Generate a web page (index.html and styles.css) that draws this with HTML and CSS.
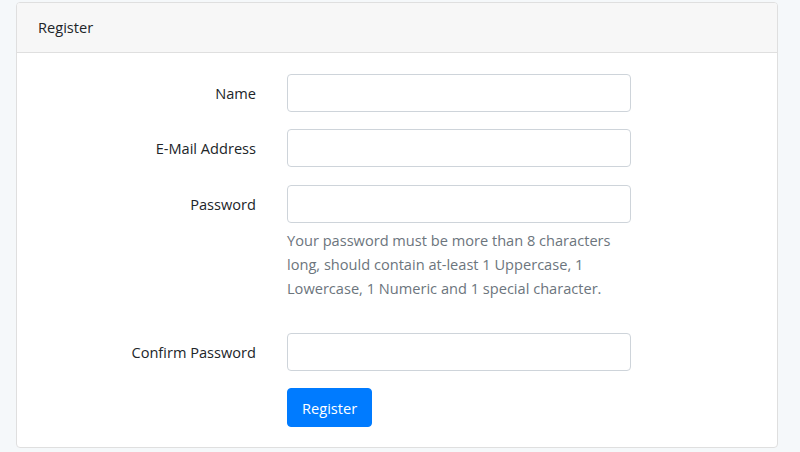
FILE: index.html
```html
<!DOCTYPE html>
<html lang="en">
<head>
<meta charset="utf-8">
<title>Register</title>
<link rel="stylesheet" href="styles.css">
</head>
<body>
<div class="page">
  <div class="card">
    <div class="card-header">Register</div>
    <div class="card-body">
      <form class="form">
        <div class="form-row">
          <label class="form-label" for="name">Name</label>
          <div class="form-field"><input class="form-input" id="name" type="text"></div>
        </div>
        <div class="form-row form-row-email">
          <label class="form-label" for="email">E-Mail Address</label>
          <div class="form-field"><input class="form-input" id="email" type="email"></div>
        </div>
        <div class="form-row form-row-help">
          <label class="form-label" for="password">Password</label>
          <div class="form-field">
            <input class="form-input" id="password" type="password">
            <p class="help-text">Your password must be more than 8 characters long, should contain at-least 1 Uppercase, 1 Lowercase, 1 Numeric and 1 special character.</p>
          </div>
        </div>
        <div class="form-row">
          <label class="form-label" for="password-confirm">Confirm Password</label>
          <div class="form-field"><input class="form-input" id="password-confirm" type="password"></div>
        </div>
        <div class="form-row form-row-last">
          <div></div>
          <div class="form-field"><button class="btn-primary" type="button">Register</button></div>
        </div>
      </form>
    </div>
  </div>
</div>
</body>
</html>
```

FILE: styles.css
```css
html, body {
  margin: 0;
  padding: 0;
}
body {
  background: #f5f8fa;
  font-family: "Open Sans", Lato, "Liberation Sans", sans-serif;
  font-size: 14.6px;
  line-height: 24px;
  color: #212529;
}
.page {
  padding: 2px 0 0 16px;
}
.card {
  width: 760px;
  background: #fff;
  border: 1px solid #dfdfdf;
  border-radius: 4px;
  overflow: hidden;
}
.card-header {
  background: #f7f7f7;
  border-bottom: 1px solid #dfdfdf;
  padding: 12px 20px 13px 21px;
  line-height: 24px;
}
.card-body {
  padding: 21px 20px 20px 20px;
}
.form-row {
  display: grid;
  grid-template-columns: 219px 344px;
  column-gap: 31px;
  margin-bottom: 17px;
}
.form-row-email {
  margin-bottom: 18px;
}
.form-row-help {
  margin-bottom: 33px;
}
.form-row-last {
  margin-bottom: 0;
}
.form-label {
  text-align: right;
  padding-top: 7px;
  line-height: 24px;
}
.form-input {
  display: block;
  box-sizing: border-box;
  width: 344px;
  height: 38px;
  margin: 0;
  padding: 6px 12px;
  border: 1px solid #ced4da;
  border-radius: 4px;
  background: #fff;
  font: inherit;
}
.help-text {
  margin: 5px 0 0 0;
  color: #6c757d;
  line-height: 24px;
}
.btn-primary {
  display: block;
  height: 39px;
  padding: 6px 14px;
  border: 1px solid #007bff;
  border-radius: 4px;
  background: #007bff;
  color: #fff;
  font: inherit;
  line-height: 24px;
}
```
